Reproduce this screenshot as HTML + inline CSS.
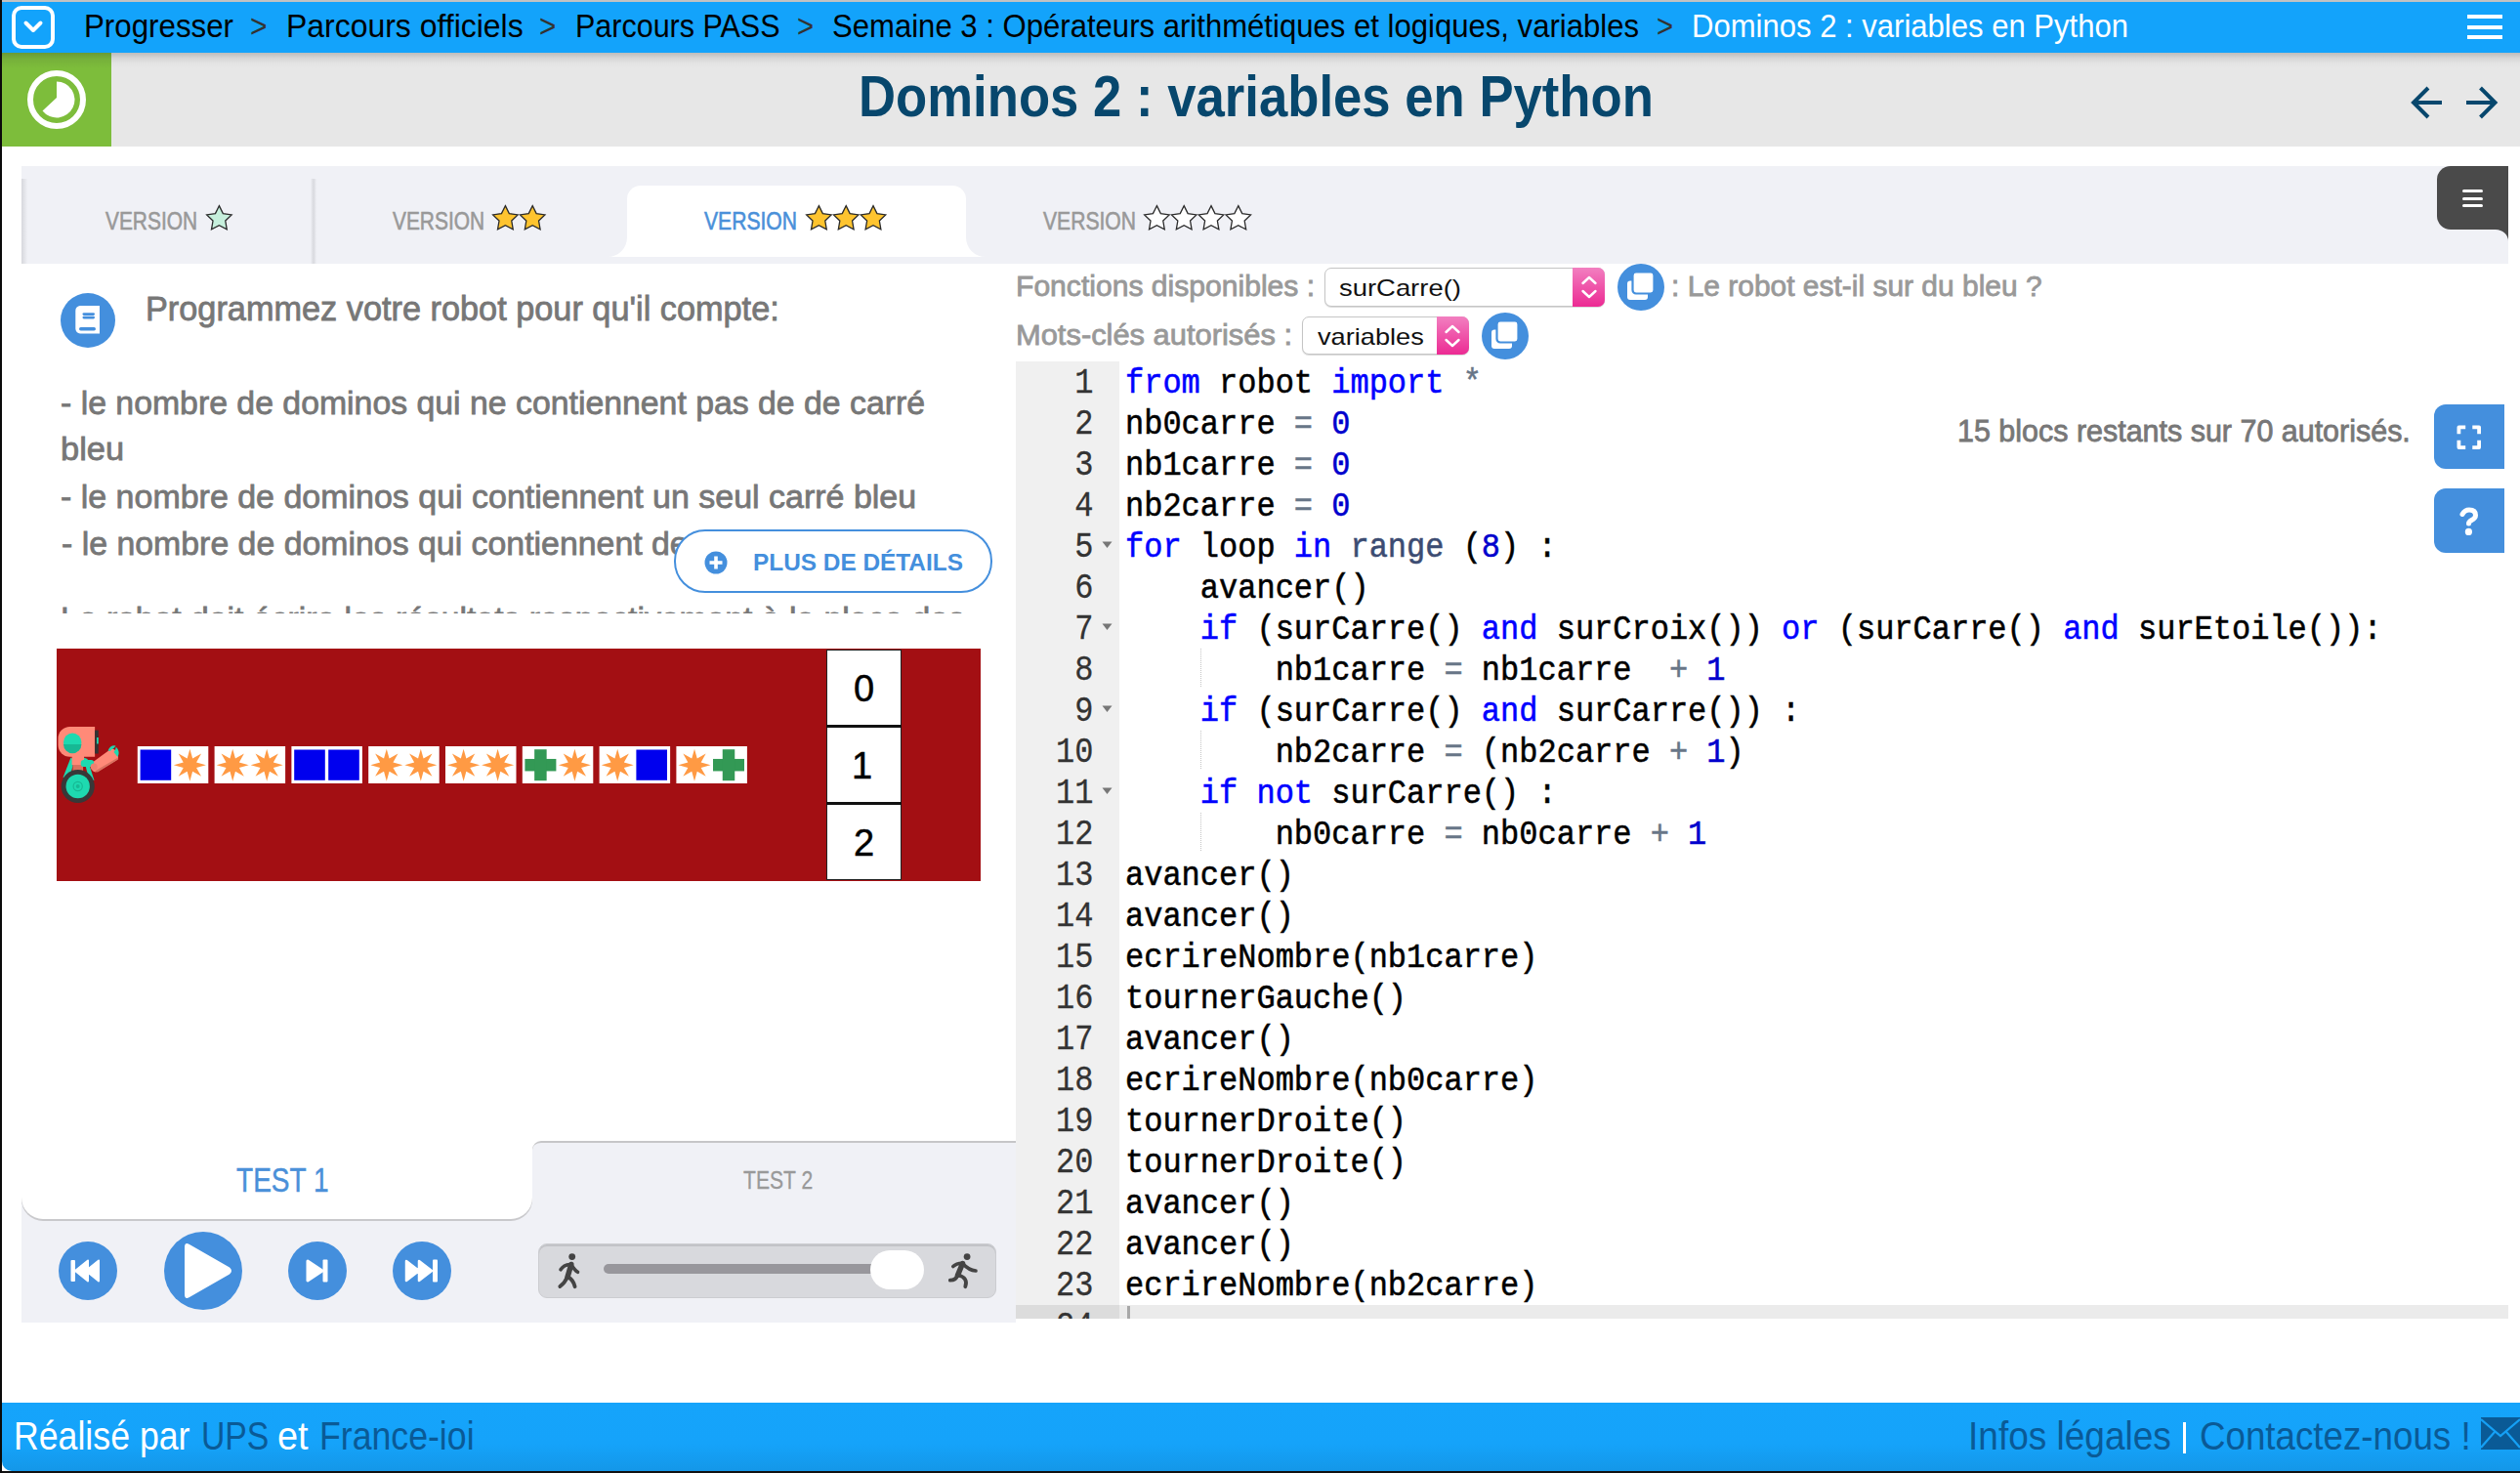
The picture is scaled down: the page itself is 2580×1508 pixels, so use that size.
<!DOCTYPE html><html><head><meta charset="utf-8"><style>
html,body{margin:0;padding:0;width:2580px;height:1508px;overflow:hidden;background:#fff;font-family:"Liberation Sans",sans-serif;}
.a{position:absolute;}
</style></head><body><div class="a" style="left:0;top:0;width:2580px;height:2px;background:#c2c2c2"></div><div class="a" style="left:2px;top:2px;width:2578px;height:52px;background:#13a3fb"></div><div class="a" style="left:12px;top:6px;width:36px;height:36px;border:4px solid #fff;border-radius:10px"></div><svg class="a" style="left:12px;top:6px" width="44" height="44"><polyline points="14.5,17.5 22,25 29.5,17.5" fill="none" stroke="#fff" stroke-width="4" stroke-linecap="round" stroke-linejoin="round"/></svg><div style="position:absolute;left:85.90px;top:9.64px;font-family:'Liberation Sans', sans-serif;font-size:33.5px;line-height:33.5px;color:#000;white-space:pre;transform-origin:0 0;transform:scaleX(0.9340);">Progresser</div><div style="position:absolute;left:255.50px;top:9.64px;font-family:'Liberation Sans', sans-serif;font-size:33.5px;line-height:33.5px;color:#333;white-space:pre;transform-origin:0 0;transform:scaleX(0.8955);">&gt;</div><div style="position:absolute;left:292.50px;top:9.64px;font-family:'Liberation Sans', sans-serif;font-size:33.5px;line-height:33.5px;color:#000;white-space:pre;transform-origin:0 0;transform:scaleX(0.9537);">Parcours officiels</div><div style="position:absolute;left:552.10px;top:9.64px;font-family:'Liberation Sans', sans-serif;font-size:33.5px;line-height:33.5px;color:#333;white-space:pre;transform-origin:0 0;transform:scaleX(0.8852);">&gt;</div><div style="position:absolute;left:589.10px;top:9.64px;font-family:'Liberation Sans', sans-serif;font-size:33.5px;line-height:33.5px;color:#000;white-space:pre;transform-origin:0 0;transform:scaleX(0.9099);">Parcours PASS</div><div style="position:absolute;left:816.00px;top:9.64px;font-family:'Liberation Sans', sans-serif;font-size:33.5px;line-height:33.5px;color:#333;white-space:pre;transform-origin:0 0;transform:scaleX(0.8749);">&gt;</div><div style="position:absolute;left:851.80px;top:9.64px;font-family:'Liberation Sans', sans-serif;font-size:33.5px;line-height:33.5px;color:#000;white-space:pre;transform-origin:0 0;transform:scaleX(0.9280);">Semaine 3 : Opérateurs arithmétiques et logiques, variables</div><div style="position:absolute;left:1695.50px;top:9.64px;font-family:'Liberation Sans', sans-serif;font-size:33.5px;line-height:33.5px;color:#333;white-space:pre;transform-origin:0 0;transform:scaleX(0.8749);">&gt;</div><div style="position:absolute;left:1732.00px;top:9.64px;font-family:'Liberation Sans', sans-serif;font-size:33.5px;line-height:33.5px;color:#fff;white-space:pre;transform-origin:0 0;transform:scaleX(0.9268);">Dominos 2 : variables en Python</div><div class="a" style="left:2526px;top:15px;width:36px;height:4px;background:#fff"></div><div class="a" style="left:2526px;top:26px;width:36px;height:4px;background:#fff"></div><div class="a" style="left:2526px;top:36px;width:36px;height:4px;background:#fff"></div><div class="a" style="left:2px;top:54px;width:2578px;height:96px;background:#e7e7e7"></div><div class="a" style="left:114px;top:54px;width:2466px;height:16px;background:linear-gradient(#bcbcbc,#d6d6d6 35%,#e4e4e4 70%,#e7e7e7)"></div><div class="a" style="left:2px;top:54px;width:112px;height:96px;background:#7dbd3b"></div><div class="a" style="left:2px;top:54px;width:112px;height:16px;background:linear-gradient(#6a9a36,#76b03a 40%,#7dbd3b)"></div><svg class="a" style="left:26px;top:70px" width="64" height="64"><circle cx="32" cy="32" r="27" fill="none" stroke="#fff" stroke-width="6"/><path d="M32,13.5 A18.5,18.5 0 1 1 17.5,43.5 L32,30 Z" fill="#fff"/></svg><div style="position:absolute;left:879.00px;top:70.06px;font-family:'Liberation Sans', sans-serif;font-size:59px;line-height:59px;color:#07476d;white-space:pre;transform-origin:0 0;transform:scaleX(0.8930);font-weight:bold;">Dominos 2 : variables en Python</div><svg class="a" style="left:2460px;top:84px" width="110" height="44"><g fill="none" stroke="#07476d" stroke-width="4"><path d="M11,21 H40 M26,6 L11,21 L26,36"/><path d="M65,21 H94.5 M79.5,6 L94.5,21 L79.5,36"/></g></svg><div class="a" style="left:22px;top:170px;width:2546px;height:100px;background:#f0f1f6"></div><div class="a" style="left:22px;top:183px;width:6px;height:87px;background:linear-gradient(90deg,#d6d7dc,#eff0f5)"></div><div class="a" style="left:318px;top:183px;width:6px;height:87px;background:linear-gradient(90deg,#eff0f5,#d8d9de,#eff0f5)"></div><div class="a" style="left:642px;top:190px;width:347px;height:73px;background:#fff;border-radius:14px 14px 0 0"></div><svg class="a" style="left:622px;top:243px" width="20" height="20"><path d="M0,20 A20,20 0 0 0 20,0 V20 Z" fill="#fff"/></svg><svg class="a" style="left:989px;top:243px" width="20" height="20"><path d="M20,20 A20,20 0 0 1 0,0 V20 Z" fill="#fff"/></svg><div style="position:absolute;left:107.50px;top:213.91px;font-family:'Liberation Sans', sans-serif;font-size:25.5px;line-height:25.5px;color:#999999;white-space:pre;transform-origin:0 0;transform:scaleX(0.8192);-webkit-text-stroke:0.6px #999999;">VERSION</div><div style="position:absolute;left:401.50px;top:213.91px;font-family:'Liberation Sans', sans-serif;font-size:25.5px;line-height:25.5px;color:#999999;white-space:pre;transform-origin:0 0;transform:scaleX(0.8192);-webkit-text-stroke:0.6px #999999;">VERSION</div><div style="position:absolute;left:720.50px;top:213.91px;font-family:'Liberation Sans', sans-serif;font-size:25.5px;line-height:25.5px;color:#4a90d9;white-space:pre;transform-origin:0 0;transform:scaleX(0.8279);-webkit-text-stroke:0.6px #4a90d9;">VERSION</div><div style="position:absolute;left:1067.50px;top:213.91px;font-family:'Liberation Sans', sans-serif;font-size:25.5px;line-height:25.5px;color:#999999;white-space:pre;transform-origin:0 0;transform:scaleX(0.8279);-webkit-text-stroke:0.6px #999999;">VERSION</div><svg class="a" style="left:0;top:0" width="1400" height="270"><path d="M224.39,210.60 L228.33,218.58 L237.14,219.86 L230.77,226.07 L232.27,234.84 L224.39,230.70 L216.52,234.84 L218.02,226.07 L211.65,219.86 L220.46,218.58 Z" fill="#c6efdc" stroke="#2a2a2a" stroke-width="1.3" stroke-linejoin="miter"/><path d="M517.39,210.60 L521.33,218.58 L530.14,219.86 L523.77,226.07 L525.27,234.84 L517.39,230.70 L509.52,234.84 L511.02,226.07 L504.65,219.86 L513.46,218.58 Z" fill="#fec42f" stroke="#2a2a2a" stroke-width="1.3" stroke-linejoin="miter"/><path d="M545.19,210.60 L549.13,218.58 L557.94,219.86 L551.57,226.07 L553.07,234.84 L545.19,230.70 L537.32,234.84 L538.82,226.07 L532.45,219.86 L541.26,218.58 Z" fill="#fec42f" stroke="#2a2a2a" stroke-width="1.3" stroke-linejoin="miter"/><path d="M838.39,210.60 L842.33,218.58 L851.14,219.86 L844.77,226.07 L846.27,234.84 L838.39,230.70 L830.52,234.84 L832.02,226.07 L825.65,219.86 L834.46,218.58 Z" fill="#fec42f" stroke="#2a2a2a" stroke-width="1.3" stroke-linejoin="miter"/><path d="M866.19,210.60 L870.13,218.58 L878.94,219.86 L872.57,226.07 L874.07,234.84 L866.19,230.70 L858.32,234.84 L859.82,226.07 L853.45,219.86 L862.26,218.58 Z" fill="#fec42f" stroke="#2a2a2a" stroke-width="1.3" stroke-linejoin="miter"/><path d="M893.99,210.60 L897.93,218.58 L906.74,219.86 L900.37,226.07 L901.87,234.84 L893.99,230.70 L886.12,234.84 L887.62,226.07 L881.25,219.86 L890.06,218.58 Z" fill="#fec42f" stroke="#2a2a2a" stroke-width="1.3" stroke-linejoin="miter"/><path d="M1184.39,210.60 L1188.33,218.58 L1197.14,219.86 L1190.77,226.07 L1192.27,234.84 L1184.39,230.70 L1176.52,234.84 L1178.02,226.07 L1171.65,219.86 L1180.46,218.58 Z" fill="#ffffff" stroke="#2a2a2a" stroke-width="1.3" stroke-linejoin="miter"/><path d="M1212.19,210.60 L1216.13,218.58 L1224.94,219.86 L1218.57,226.07 L1220.07,234.84 L1212.19,230.70 L1204.32,234.84 L1205.82,226.07 L1199.45,219.86 L1208.26,218.58 Z" fill="#ffffff" stroke="#2a2a2a" stroke-width="1.3" stroke-linejoin="miter"/><path d="M1239.99,210.60 L1243.93,218.58 L1252.74,219.86 L1246.37,226.07 L1247.87,234.84 L1239.99,230.70 L1232.12,234.84 L1233.62,226.07 L1227.25,219.86 L1236.06,218.58 Z" fill="#ffffff" stroke="#2a2a2a" stroke-width="1.3" stroke-linejoin="miter"/><path d="M1267.79,210.60 L1271.73,218.58 L1280.54,219.86 L1274.17,226.07 L1275.67,234.84 L1267.79,230.70 L1259.92,234.84 L1261.42,226.07 L1255.05,219.86 L1263.86,218.58 Z" fill="#ffffff" stroke="#2a2a2a" stroke-width="1.3" stroke-linejoin="miter"/></svg><div class="a" style="left:2495px;top:170px;width:73px;height:65px;background:#4a4a4a;border-radius:14px 0 0 14px"></div><svg class="a" style="left:2555px;top:235px" width="13" height="12"><path d="M0,0 H13 V12 A13,12 0 0 0 0,0 Z" fill="#4a4a4a"/></svg><div class="a" style="left:2521px;top:194px;width:21px;height:3.3px;background:#fff;border-radius:1.5px"></div><div class="a" style="left:2521px;top:201.5px;width:21px;height:3.3px;background:#fff;border-radius:1.5px"></div><div class="a" style="left:2521px;top:209px;width:21px;height:3.3px;background:#fff;border-radius:1.5px"></div><div class="a" style="left:62px;top:300px;width:56px;height:56px;border-radius:50%;background:#448fdd"></div><svg class="a" style="left:62px;top:300px" width="56" height="56"><path d="M20,13 H40 V41.5 H20 A5,5 0 0 1 15.3,36.5 V18 A5,5 0 0 1 20,13 Z" fill="#fff"/><rect x="22.5" y="20.3" width="12.5" height="2.6" rx="1.3" fill="#448fdd"/><rect x="22.5" y="23.8" width="12.5" height="2.6" rx="1.3" fill="#448fdd"/><rect x="19" y="35" width="17" height="3.4" rx="1.7" fill="#448fdd"/></svg><div style="position:absolute;left:148.80px;top:298.37px;font-family:'Liberation Sans', sans-serif;font-size:35px;line-height:35px;color:#777777;white-space:pre;transform-origin:0 0;transform:scaleX(0.9796);-webkit-text-stroke:0.8px #777777;">Programmez votre robot pour qu&#x27;il compte:</div><div style="position:absolute;left:61.50px;top:395.22px;font-family:'Liberation Sans', sans-serif;font-size:34px;line-height:34px;color:#777777;white-space:pre;transform-origin:0 0;transform:scaleX(0.9942);-webkit-text-stroke:0.8px #777777;">- le nombre de dominos qui ne contiennent pas de de carré</div><div style="position:absolute;left:61.50px;top:442.22px;font-family:'Liberation Sans', sans-serif;font-size:34px;line-height:34px;color:#777777;white-space:pre;transform-origin:0 0;transform:scaleX(1.0115);-webkit-text-stroke:0.8px #777777;">bleu</div><div style="position:absolute;left:61.50px;top:491.22px;font-family:'Liberation Sans', sans-serif;font-size:34px;line-height:34px;color:#777777;white-space:pre;transform-origin:0 0;transform:scaleX(0.9990);-webkit-text-stroke:0.8px #777777;">- le nombre de dominos qui contiennent un seul carré bleu</div><div style="position:absolute;left:63.00px;top:539.22px;font-family:'Liberation Sans', sans-serif;font-size:34px;line-height:34px;color:#777777;white-space:pre;transform-origin:0 0;transform:scaleX(0.9956);-webkit-text-stroke:0.8px #777777;">- le nombre de dominos qui contiennent deux carrés bleus</div><div class="a" style="left:40px;top:600px;width:960px;height:28px;overflow:hidden"><div style="position:absolute;left:21.50px;top:16.22px;font-family:'Liberation Sans', sans-serif;font-size:34px;line-height:34px;color:#777777;white-space:pre;transform-origin:0 0;transform:scaleX(0.9918);-webkit-text-stroke:0.8px #777777;">Le robot doit écrire les résultats respectivement à la place des</div></div><div class="a" style="left:690px;top:542px;width:322px;height:61px;border:2px solid #448fdd;border-radius:32px;background:#fff"></div><svg class="a" style="left:721px;top:564px" width="24" height="24"><circle cx="12" cy="12" r="11.5" fill="#448fdd"/><path d="M12,5.5 V18.5 M5.5,12 H18.5" stroke="#fff" stroke-width="3.6"/></svg><div style="position:absolute;left:770.50px;top:564.28px;font-family:'Liberation Sans', sans-serif;font-size:24px;line-height:24px;color:#448fdd;white-space:pre;transform-origin:0 0;transform:scaleX(1.0157);font-weight:bold;">PLUS DE DÉTAILS</div><div class="a" style="left:58.3px;top:664.3px;width:945.6px;height:237.4px;background:#a30f13"></div><svg class="a" style="left:0;top:0" width="1010" height="910"><rect x="140.80" y="764" width="72.5" height="38" fill="#fff"/><rect x="143.60" y="767.5" width="31.6" height="31.3" fill="#0000ee"/><polygon points="194.40,766.70 197.16,776.55 206.07,771.53 201.05,780.44 210.90,783.20 201.05,785.96 206.07,794.87 197.16,789.85 194.40,799.70 191.64,789.85 182.73,794.87 187.75,785.96 177.90,783.20 187.75,780.44 182.73,771.53 191.64,776.55" fill="#ff9a44"/><rect x="219.60" y="764" width="72.5" height="38" fill="#fff"/><polygon points="238.20,766.70 240.96,776.55 249.87,771.53 244.85,780.44 254.70,783.20 244.85,785.96 249.87,794.87 240.96,789.85 238.20,799.70 235.44,789.85 226.53,794.87 231.55,785.96 221.70,783.20 231.55,780.44 226.53,771.53 235.44,776.55" fill="#ff9a44"/><polygon points="273.20,766.70 275.96,776.55 284.87,771.53 279.85,780.44 289.70,783.20 279.85,785.96 284.87,794.87 275.96,789.85 273.20,799.70 270.44,789.85 261.53,794.87 266.55,785.96 256.70,783.20 266.55,780.44 261.53,771.53 270.44,776.55" fill="#ff9a44"/><rect x="298.40" y="764" width="72.5" height="38" fill="#fff"/><rect x="301.20" y="767.5" width="31.6" height="31.3" fill="#0000ee"/><rect x="336.20" y="767.5" width="31.6" height="31.3" fill="#0000ee"/><rect x="377.20" y="764" width="72.5" height="38" fill="#fff"/><polygon points="395.80,766.70 398.56,776.55 407.47,771.53 402.45,780.44 412.30,783.20 402.45,785.96 407.47,794.87 398.56,789.85 395.80,799.70 393.04,789.85 384.13,794.87 389.15,785.96 379.30,783.20 389.15,780.44 384.13,771.53 393.04,776.55" fill="#ff9a44"/><polygon points="430.80,766.70 433.56,776.55 442.47,771.53 437.45,780.44 447.30,783.20 437.45,785.96 442.47,794.87 433.56,789.85 430.80,799.70 428.04,789.85 419.13,794.87 424.15,785.96 414.30,783.20 424.15,780.44 419.13,771.53 428.04,776.55" fill="#ff9a44"/><rect x="456.00" y="764" width="72.5" height="38" fill="#fff"/><polygon points="474.60,766.70 477.36,776.55 486.27,771.53 481.25,780.44 491.10,783.20 481.25,785.96 486.27,794.87 477.36,789.85 474.60,799.70 471.84,789.85 462.93,794.87 467.95,785.96 458.10,783.20 467.95,780.44 462.93,771.53 471.84,776.55" fill="#ff9a44"/><polygon points="509.60,766.70 512.36,776.55 521.27,771.53 516.25,780.44 526.10,783.20 516.25,785.96 521.27,794.87 512.36,789.85 509.60,799.70 506.84,789.85 497.93,794.87 502.95,785.96 493.10,783.20 502.95,780.44 497.93,771.53 506.84,776.55" fill="#ff9a44"/><rect x="534.80" y="764" width="72.5" height="38" fill="#fff"/><rect x="537.40" y="776.95" width="32" height="12.5" fill="#339955"/><rect x="547.15" y="767.20" width="12.5" height="32" fill="#339955"/><polygon points="588.40,766.70 591.16,776.55 600.07,771.53 595.05,780.44 604.90,783.20 595.05,785.96 600.07,794.87 591.16,789.85 588.40,799.70 585.64,789.85 576.73,794.87 581.75,785.96 571.90,783.20 581.75,780.44 576.73,771.53 585.64,776.55" fill="#ff9a44"/><rect x="613.60" y="764" width="72.5" height="38" fill="#fff"/><polygon points="632.20,766.70 634.96,776.55 643.87,771.53 638.85,780.44 648.70,783.20 638.85,785.96 643.87,794.87 634.96,789.85 632.20,799.70 629.44,789.85 620.53,794.87 625.55,785.96 615.70,783.20 625.55,780.44 620.53,771.53 629.44,776.55" fill="#ff9a44"/><rect x="651.40" y="767.5" width="31.6" height="31.3" fill="#0000ee"/><rect x="692.40" y="764" width="72.5" height="38" fill="#fff"/><polygon points="711.00,766.70 713.76,776.55 722.67,771.53 717.65,780.44 727.50,783.20 717.65,785.96 722.67,794.87 713.76,789.85 711.00,799.70 708.24,789.85 699.33,794.87 704.35,785.96 694.50,783.20 704.35,780.44 699.33,771.53 708.24,776.55" fill="#ff9a44"/><rect x="730.00" y="776.95" width="32" height="12.5" fill="#339955"/><rect x="739.75" y="767.20" width="12.5" height="32" fill="#339955"/><g><path d="M72.5,775.5 L76,778 L71,798 L64.5,796 Z" fill="#1ed9b0"/><path d="M85.5,775.5 L89.5,777 L96.5,799 L91,798 Z" fill="#1ed9b0"/><rect x="73.6" y="774" width="12.4" height="9" fill="#ff8a78"/><rect x="74.5" y="783" width="10.6" height="8" fill="#d9705f"/><path d="M59.5,756 A12,12 0 0 1 71.5,744 H97.1 V774.8 H71.5 A12,12 0 0 1 59.5,762.8 Z" fill="#ff8a78"/><rect x="97.1" y="747.6" width="3.7" height="23.9" fill="#333"/><rect x="99" y="755" width="1.8" height="6.5" fill="#1ed9b0"/><circle cx="74.2" cy="759.8" r="9.2" fill="#1ed9b0"/><path d="M65,762 A9.2,9.2 0 0 0 83.4,762 Z" fill="#17b894"/><path d="M94,781 L112.5,767.5 Q116,765.5 118.5,768.5 L121,774.5 Q121.5,777 119,778.5 L100,790 Q96,791.5 94,788 Z" fill="#ff8a78"/><path d="M97,789.5 L120,776 L121,777.5 L100,790.5 Z" fill="#d9705f"/><path d="M110.5,768.5 Q113,762.5 118.5,763.5 L116,766.5 Q113.5,766.5 113,769 Z" fill="#1ed9b0"/><path d="M116.5,770 Q119,766.5 118.5,764.5 Q122,767 121.5,772 L120.5,775 Z" fill="#1ed9b0"/><rect x="82.7" y="778" width="13.5" height="7" rx="3" fill="#1ed9b0"/><circle cx="96.2" cy="785" r="3.5" fill="#f08070"/><circle cx="79.7" cy="805" r="17.1" fill="#383838"/><circle cx="79.7" cy="805" r="12.2" fill="#1ed9b0"/><circle cx="79.7" cy="805" r="4.6" fill="none" stroke="#17b894" stroke-width="1.2"/><circle cx="79.7" cy="805" r="2" fill="#17b894"/></g></svg><div class="a" style="left:846.4px;top:664.5px;width:75px;height:234px;background:#fff;border:1px solid #222"></div><div class="a" style="left:846.4px;top:742px;width:77px;height:3px;background:#111"></div><div class="a" style="left:846.4px;top:821px;width:77px;height:3px;background:#111"></div><div style="position:absolute;left:874.00px;top:685.73px;font-family:'Liberation Sans', sans-serif;font-size:38px;line-height:38px;color:#000;white-space:pre;transform-origin:0 0;-webkit-text-stroke:0.5px #000;">0</div><div style="position:absolute;left:872.00px;top:764.83px;font-family:'Liberation Sans', sans-serif;font-size:38px;line-height:38px;color:#000;white-space:pre;transform-origin:0 0;-webkit-text-stroke:0.5px #000;">1</div><div style="position:absolute;left:874.00px;top:843.63px;font-family:'Liberation Sans', sans-serif;font-size:38px;line-height:38px;color:#000;white-space:pre;transform-origin:0 0;-webkit-text-stroke:0.5px #000;">2</div><div class="a" style="left:22px;top:1200px;width:1018px;height:154px;background:#f0f1f6"></div><div class="a" style="left:545px;top:1168px;width:495px;height:40px;background:#f0f1f6;border-top:2px solid #c6c6c8;border-radius:9px 0 0 0;box-sizing:border-box"></div><div class="a" style="left:22px;top:1140px;width:523px;height:108px;background:#fff;border-radius:0 0 22px 22px;box-shadow:0 2px 0 #c9c9cc"></div><div style="position:absolute;left:242.00px;top:1191.30px;font-family:'Liberation Sans', sans-serif;font-size:34.5px;line-height:34.5px;color:#4a90d9;white-space:pre;transform-origin:0 0;transform:scaleX(0.8128);-webkit-text-stroke:0.45px #4a90d9;">TEST 1</div><div style="position:absolute;left:761.20px;top:1194.79px;font-family:'Liberation Sans', sans-serif;font-size:26px;line-height:26px;color:#999999;white-space:pre;transform-origin:0 0;transform:scaleX(0.8115);-webkit-text-stroke:0.3px #999999;">TEST 2</div><svg class="a" style="left:60px;top:1271px" width="60" height="60"><circle cx="30" cy="30" r="30" fill="#448fdd"/><rect x="12.5" y="19" width="4.5" height="22" rx="1" fill="#fff"/><path d="M17,30 L30,19.5 V40.5 Z M28,30 L41,19.5 V40.5 Z" fill="#fff" stroke="#fff" stroke-width="2" stroke-linejoin="round"/></svg><svg class="a" style="left:168px;top:1261px" width="80" height="80"><circle cx="40" cy="40" r="40" fill="#448fdd"/><path d="M21,16 Q21,10 26,13 L67,36.5 Q71,40 67,43.5 L26,67 Q21,70 21,64 Z" fill="#fff"/></svg><svg class="a" style="left:295px;top:1271px" width="60" height="60"><circle cx="30" cy="30" r="30" fill="#448fdd"/><path d="M20,20 L35,30 L20,40 Z" fill="#fff" stroke="#fff" stroke-width="3" stroke-linejoin="round"/><rect x="35.5" y="18.5" width="5" height="23" rx="1" fill="#fff"/></svg><svg class="a" style="left:402px;top:1271px" width="60" height="60"><circle cx="30" cy="30" r="30" fill="#448fdd"/><path d="M14,20 L27,30 L14,40 Z M27,20 L40,30 L27,40 Z" fill="#fff" stroke="#fff" stroke-width="2.5" stroke-linejoin="round"/><rect x="41" y="18.5" width="5" height="23" rx="1" fill="#fff"/></svg><div class="a" style="left:551px;top:1273px;width:469px;height:56px;background:#d8d9dd;border:1.5px solid #cbccd0;box-shadow:inset 0 2px 0 #c2c3c7;border-radius:9px;box-sizing:border-box"></div><div class="a" style="left:618px;top:1294px;width:290px;height:10px;background:#98979c;border-radius:5px"></div><div class="a" style="left:891px;top:1280px;width:55px;height:40px;background:#fff;border-radius:20px"></div><svg class="a" style="left:0;top:0;overflow:visible" width="1" height="1"><g fill="none" stroke="#444" stroke-linecap="round" stroke-linejoin="round"><circle cx="585.7" cy="1286.6" r="3.4" fill="#444" stroke="none"/><path d="M584.8,1294.5 L581,1307.5" stroke-width="5.5"/><path d="M583.5,1294.5 Q577,1295 574,1299.8" stroke-width="3.6"/><path d="M585,1295 Q588.5,1300.5 591.5,1302.3" stroke-width="3.6"/><path d="M580.5,1308 Q578.5,1313 573.3,1317" stroke-width="3.8"/><path d="M582,1307.5 Q587,1310.5 588.6,1317.2" stroke-width="3.8"/></g></svg><svg class="a" style="left:0;top:0;overflow:visible" width="1" height="1"><g fill="none" stroke="#444" stroke-linecap="round" stroke-linejoin="round"><circle cx="990.1" cy="1286.6" r="3.4" fill="#444" stroke="none"/><path d="M985.5,1293.5 L980.5,1305.5" stroke-width="5.5"/><path d="M985,1293.2 Q979,1293.5 975.8,1296.5" stroke-width="3.6"/><path d="M986,1294 Q992,1300.5 999,1301" stroke-width="3.6"/><path d="M980,1306 Q979,1310.5 972.8,1310.6" stroke-width="3.8"/><path d="M981,1305.5 Q991.5,1308 988.3,1317.2" stroke-width="3.8"/></g></svg><div style="position:absolute;left:1039.50px;top:277.61px;font-family:'Liberation Sans', sans-serif;font-size:30px;line-height:30px;color:#999999;white-space:pre;transform-origin:0 0;transform:scaleX(1.0029);-webkit-text-stroke:0.8px #999999;">Fonctions disponibles :</div><div style="position:absolute;left:1039.50px;top:328.21px;font-family:'Liberation Sans', sans-serif;font-size:30px;line-height:30px;color:#999999;white-space:pre;transform-origin:0 0;transform:scaleX(1.0287);-webkit-text-stroke:0.8px #999999;">Mots-clés autorisés :</div><div style="position:absolute;left:1711.00px;top:277.61px;font-family:'Liberation Sans', sans-serif;font-size:30px;line-height:30px;color:#999999;white-space:pre;transform-origin:0 0;transform:scaleX(0.9984);-webkit-text-stroke:0.8px #999999;">: Le robot est-il sur du bleu ?</div><div class="a" style="left:1355.5px;top:274.3px;width:287.5px;height:39.39999999999998px;background:#fff;border:1px solid #c5c5c5;border-radius:7px;box-sizing:border-box;box-shadow:0 1px 1px rgba(0,0,0,0.15)"></div><div class="a" style="left:1610px;top:274.3px;width:33px;height:39.39999999999998px;background:linear-gradient(#f27fc0,#ec2a93);border-radius:0 7px 7px 0"></div><svg class="a" style="left:1616.5px;top:280.0px" width="20" height="28"><path d="M3.5,10 L10,4 L16.5,10 M3.5,18 L10,24 L16.5,18" fill="none" stroke="#fff" stroke-width="2.4" stroke-linecap="round" stroke-linejoin="round"/></svg><div style="position:absolute;left:1370.50px;top:282.88px;font-family:'Liberation Sans', sans-serif;font-size:24px;line-height:24px;color:#111;white-space:pre;transform-origin:0 0;transform:scaleX(1.1422);">surCarre()</div><div class="a" style="left:1332.5px;top:324.3px;width:171.0999999999999px;height:39.19999999999999px;background:#fff;border:1px solid #c5c5c5;border-radius:7px;box-sizing:border-box;box-shadow:0 1px 1px rgba(0,0,0,0.15)"></div><div class="a" style="left:1471px;top:324.3px;width:32.59999999999991px;height:39.19999999999999px;background:linear-gradient(#f27fc0,#ec2a93);border-radius:0 7px 7px 0"></div><svg class="a" style="left:1477.3px;top:329.9px" width="20" height="28"><path d="M3.5,10 L10,4 L16.5,10 M3.5,18 L10,24 L16.5,18" fill="none" stroke="#fff" stroke-width="2.4" stroke-linecap="round" stroke-linejoin="round"/></svg><div style="position:absolute;left:1349.00px;top:333.38px;font-family:'Liberation Sans', sans-serif;font-size:24px;line-height:24px;color:#111;white-space:pre;transform-origin:0 0;transform:scaleX(1.1333);">variables</div><svg class="a" style="left:1656px;top:270px" width="48" height="48"><circle cx="24" cy="24" r="24" fill="#448fdd"/><rect x="10" y="17.5" width="21" height="19.5" rx="3" fill="#fff"/><rect x="15.5" y="8.5" width="22" height="22" rx="3.5" fill="#fff" stroke="#448fdd" stroke-width="2.2"/></svg><svg class="a" style="left:1517px;top:320px" width="48" height="48"><circle cx="24" cy="24" r="24" fill="#448fdd"/><rect x="10" y="17.5" width="21" height="19.5" rx="3" fill="#fff"/><rect x="15.5" y="8.5" width="22" height="22" rx="3.5" fill="#fff" stroke="#448fdd" stroke-width="2.2"/></svg><div class="a" style="left:1040px;top:370px;width:1528px;height:980px;background:#fff;overflow:hidden"><div class="a" style="left:0;top:0;width:106px;height:980px;background:#f0f0f0"></div><div class="a" style="left:106px;top:966.0px;width:1422px;height:42px;background:#ebebeb"></div><div class="a" style="left:0;top:966.0px;width:106px;height:42px;background:#dcdcdc"></div><div class="a" style="left:113.5px;top:966.5px;width:3.5px;height:40px;background:#a8a8a8"></div><div class="a" style="left:112px;top:2.5px;height:42px;font-family:'Liberation Mono',monospace;font-size:32px;line-height:42px;white-space:pre;-webkit-text-stroke:0.5px currentColor;transform:scaleY(1.08);transform-origin:0 29.5px"><span style="color:#0000ff">from</span><span style="color:#000"> robot </span><span style="color:#0000ff">import</span><span style="color:#000"> </span><span style="color:#687687">*</span></div><div class="a" style="left:0;width:79.5px;text-align:right;top:2.5px;height:42px;font-family:'Liberation Mono',monospace;font-size:32px;line-height:42px;color:#333;-webkit-text-stroke:0.25px #333;transform:scaleY(1.15);transform-origin:0 29.5px">1</div><div class="a" style="left:112px;top:44.5px;height:42px;font-family:'Liberation Mono',monospace;font-size:32px;line-height:42px;white-space:pre;-webkit-text-stroke:0.5px currentColor;transform:scaleY(1.08);transform-origin:0 29.5px"><span style="color:#000">nb0carre </span><span style="color:#687687">=</span><span style="color:#000"> </span><span style="color:#0000cd">0</span></div><div class="a" style="left:0;width:79.5px;text-align:right;top:44.5px;height:42px;font-family:'Liberation Mono',monospace;font-size:32px;line-height:42px;color:#333;-webkit-text-stroke:0.25px #333;transform:scaleY(1.15);transform-origin:0 29.5px">2</div><div class="a" style="left:112px;top:86.5px;height:42px;font-family:'Liberation Mono',monospace;font-size:32px;line-height:42px;white-space:pre;-webkit-text-stroke:0.5px currentColor;transform:scaleY(1.08);transform-origin:0 29.5px"><span style="color:#000">nb1carre </span><span style="color:#687687">=</span><span style="color:#000"> </span><span style="color:#0000cd">0</span></div><div class="a" style="left:0;width:79.5px;text-align:right;top:86.5px;height:42px;font-family:'Liberation Mono',monospace;font-size:32px;line-height:42px;color:#333;-webkit-text-stroke:0.25px #333;transform:scaleY(1.15);transform-origin:0 29.5px">3</div><div class="a" style="left:112px;top:128.5px;height:42px;font-family:'Liberation Mono',monospace;font-size:32px;line-height:42px;white-space:pre;-webkit-text-stroke:0.5px currentColor;transform:scaleY(1.08);transform-origin:0 29.5px"><span style="color:#000">nb2carre </span><span style="color:#687687">=</span><span style="color:#000"> </span><span style="color:#0000cd">0</span></div><div class="a" style="left:0;width:79.5px;text-align:right;top:128.5px;height:42px;font-family:'Liberation Mono',monospace;font-size:32px;line-height:42px;color:#333;-webkit-text-stroke:0.25px #333;transform:scaleY(1.15);transform-origin:0 29.5px">4</div><div class="a" style="left:112px;top:170.5px;height:42px;font-family:'Liberation Mono',monospace;font-size:32px;line-height:42px;white-space:pre;-webkit-text-stroke:0.5px currentColor;transform:scaleY(1.08);transform-origin:0 29.5px"><span style="color:#0000ff">for</span><span style="color:#000"> loop </span><span style="color:#0000ff">in</span><span style="color:#000"> </span><span style="color:#3c4c72">range</span><span style="color:#000"> (</span><span style="color:#0000cd">8</span><span style="color:#000">) :</span></div><div class="a" style="left:0;width:79.5px;text-align:right;top:170.5px;height:42px;font-family:'Liberation Mono',monospace;font-size:32px;line-height:42px;color:#333;-webkit-text-stroke:0.25px #333;transform:scaleY(1.15);transform-origin:0 29.5px">5</div><div class="a" style="left:112px;top:212.5px;height:42px;font-family:'Liberation Mono',monospace;font-size:32px;line-height:42px;white-space:pre;-webkit-text-stroke:0.5px currentColor;transform:scaleY(1.08);transform-origin:0 29.5px"><span style="color:#000">    avancer()</span></div><div class="a" style="left:0;width:79.5px;text-align:right;top:212.5px;height:42px;font-family:'Liberation Mono',monospace;font-size:32px;line-height:42px;color:#333;-webkit-text-stroke:0.25px #333;transform:scaleY(1.15);transform-origin:0 29.5px">6</div><div class="a" style="left:112px;top:254.5px;height:42px;font-family:'Liberation Mono',monospace;font-size:32px;line-height:42px;white-space:pre;-webkit-text-stroke:0.5px currentColor;transform:scaleY(1.08);transform-origin:0 29.5px"><span style="color:#000">    </span><span style="color:#0000ff">if</span><span style="color:#000"> (surCarre() </span><span style="color:#0000ff">and</span><span style="color:#000"> surCroix()) </span><span style="color:#0000ff">or</span><span style="color:#000"> (surCarre() </span><span style="color:#0000ff">and</span><span style="color:#000"> surEtoile()):</span></div><div class="a" style="left:0;width:79.5px;text-align:right;top:254.5px;height:42px;font-family:'Liberation Mono',monospace;font-size:32px;line-height:42px;color:#333;-webkit-text-stroke:0.25px #333;transform:scaleY(1.15);transform-origin:0 29.5px">7</div><div class="a" style="left:112px;top:296.5px;height:42px;font-family:'Liberation Mono',monospace;font-size:32px;line-height:42px;white-space:pre;-webkit-text-stroke:0.5px currentColor;transform:scaleY(1.08);transform-origin:0 29.5px"><span style="color:#000">        nb1carre </span><span style="color:#687687">=</span><span style="color:#000"> nb1carre  </span><span style="color:#687687">+</span><span style="color:#000"> </span><span style="color:#0000cd">1</span></div><div class="a" style="left:0;width:79.5px;text-align:right;top:296.5px;height:42px;font-family:'Liberation Mono',monospace;font-size:32px;line-height:42px;color:#333;-webkit-text-stroke:0.25px #333;transform:scaleY(1.15);transform-origin:0 29.5px">8</div><div class="a" style="left:112px;top:338.5px;height:42px;font-family:'Liberation Mono',monospace;font-size:32px;line-height:42px;white-space:pre;-webkit-text-stroke:0.5px currentColor;transform:scaleY(1.08);transform-origin:0 29.5px"><span style="color:#000">    </span><span style="color:#0000ff">if</span><span style="color:#000"> (surCarre() </span><span style="color:#0000ff">and</span><span style="color:#000"> surCarre()) :</span></div><div class="a" style="left:0;width:79.5px;text-align:right;top:338.5px;height:42px;font-family:'Liberation Mono',monospace;font-size:32px;line-height:42px;color:#333;-webkit-text-stroke:0.25px #333;transform:scaleY(1.15);transform-origin:0 29.5px">9</div><div class="a" style="left:112px;top:380.5px;height:42px;font-family:'Liberation Mono',monospace;font-size:32px;line-height:42px;white-space:pre;-webkit-text-stroke:0.5px currentColor;transform:scaleY(1.08);transform-origin:0 29.5px"><span style="color:#000">        nb2carre </span><span style="color:#687687">=</span><span style="color:#000"> (nb2carre </span><span style="color:#687687">+</span><span style="color:#000"> </span><span style="color:#0000cd">1</span><span style="color:#000">)</span></div><div class="a" style="left:0;width:79.5px;text-align:right;top:380.5px;height:42px;font-family:'Liberation Mono',monospace;font-size:32px;line-height:42px;color:#333;-webkit-text-stroke:0.25px #333;transform:scaleY(1.15);transform-origin:0 29.5px">10</div><div class="a" style="left:112px;top:422.5px;height:42px;font-family:'Liberation Mono',monospace;font-size:32px;line-height:42px;white-space:pre;-webkit-text-stroke:0.5px currentColor;transform:scaleY(1.08);transform-origin:0 29.5px"><span style="color:#000">    </span><span style="color:#0000ff">if</span><span style="color:#000"> </span><span style="color:#0000ff">not</span><span style="color:#000"> surCarre() :</span></div><div class="a" style="left:0;width:79.5px;text-align:right;top:422.5px;height:42px;font-family:'Liberation Mono',monospace;font-size:32px;line-height:42px;color:#333;-webkit-text-stroke:0.25px #333;transform:scaleY(1.15);transform-origin:0 29.5px">11</div><div class="a" style="left:112px;top:464.5px;height:42px;font-family:'Liberation Mono',monospace;font-size:32px;line-height:42px;white-space:pre;-webkit-text-stroke:0.5px currentColor;transform:scaleY(1.08);transform-origin:0 29.5px"><span style="color:#000">        nb0carre </span><span style="color:#687687">=</span><span style="color:#000"> nb0carre </span><span style="color:#687687">+</span><span style="color:#000"> </span><span style="color:#0000cd">1</span></div><div class="a" style="left:0;width:79.5px;text-align:right;top:464.5px;height:42px;font-family:'Liberation Mono',monospace;font-size:32px;line-height:42px;color:#333;-webkit-text-stroke:0.25px #333;transform:scaleY(1.15);transform-origin:0 29.5px">12</div><div class="a" style="left:112px;top:506.5px;height:42px;font-family:'Liberation Mono',monospace;font-size:32px;line-height:42px;white-space:pre;-webkit-text-stroke:0.5px currentColor;transform:scaleY(1.08);transform-origin:0 29.5px"><span style="color:#000">avancer()</span></div><div class="a" style="left:0;width:79.5px;text-align:right;top:506.5px;height:42px;font-family:'Liberation Mono',monospace;font-size:32px;line-height:42px;color:#333;-webkit-text-stroke:0.25px #333;transform:scaleY(1.15);transform-origin:0 29.5px">13</div><div class="a" style="left:112px;top:548.5px;height:42px;font-family:'Liberation Mono',monospace;font-size:32px;line-height:42px;white-space:pre;-webkit-text-stroke:0.5px currentColor;transform:scaleY(1.08);transform-origin:0 29.5px"><span style="color:#000">avancer()</span></div><div class="a" style="left:0;width:79.5px;text-align:right;top:548.5px;height:42px;font-family:'Liberation Mono',monospace;font-size:32px;line-height:42px;color:#333;-webkit-text-stroke:0.25px #333;transform:scaleY(1.15);transform-origin:0 29.5px">14</div><div class="a" style="left:112px;top:590.5px;height:42px;font-family:'Liberation Mono',monospace;font-size:32px;line-height:42px;white-space:pre;-webkit-text-stroke:0.5px currentColor;transform:scaleY(1.08);transform-origin:0 29.5px"><span style="color:#000">ecrireNombre(nb1carre)</span></div><div class="a" style="left:0;width:79.5px;text-align:right;top:590.5px;height:42px;font-family:'Liberation Mono',monospace;font-size:32px;line-height:42px;color:#333;-webkit-text-stroke:0.25px #333;transform:scaleY(1.15);transform-origin:0 29.5px">15</div><div class="a" style="left:112px;top:632.5px;height:42px;font-family:'Liberation Mono',monospace;font-size:32px;line-height:42px;white-space:pre;-webkit-text-stroke:0.5px currentColor;transform:scaleY(1.08);transform-origin:0 29.5px"><span style="color:#000">tournerGauche()</span></div><div class="a" style="left:0;width:79.5px;text-align:right;top:632.5px;height:42px;font-family:'Liberation Mono',monospace;font-size:32px;line-height:42px;color:#333;-webkit-text-stroke:0.25px #333;transform:scaleY(1.15);transform-origin:0 29.5px">16</div><div class="a" style="left:112px;top:674.5px;height:42px;font-family:'Liberation Mono',monospace;font-size:32px;line-height:42px;white-space:pre;-webkit-text-stroke:0.5px currentColor;transform:scaleY(1.08);transform-origin:0 29.5px"><span style="color:#000">avancer()</span></div><div class="a" style="left:0;width:79.5px;text-align:right;top:674.5px;height:42px;font-family:'Liberation Mono',monospace;font-size:32px;line-height:42px;color:#333;-webkit-text-stroke:0.25px #333;transform:scaleY(1.15);transform-origin:0 29.5px">17</div><div class="a" style="left:112px;top:716.5px;height:42px;font-family:'Liberation Mono',monospace;font-size:32px;line-height:42px;white-space:pre;-webkit-text-stroke:0.5px currentColor;transform:scaleY(1.08);transform-origin:0 29.5px"><span style="color:#000">ecrireNombre(nb0carre)</span></div><div class="a" style="left:0;width:79.5px;text-align:right;top:716.5px;height:42px;font-family:'Liberation Mono',monospace;font-size:32px;line-height:42px;color:#333;-webkit-text-stroke:0.25px #333;transform:scaleY(1.15);transform-origin:0 29.5px">18</div><div class="a" style="left:112px;top:758.5px;height:42px;font-family:'Liberation Mono',monospace;font-size:32px;line-height:42px;white-space:pre;-webkit-text-stroke:0.5px currentColor;transform:scaleY(1.08);transform-origin:0 29.5px"><span style="color:#000">tournerDroite()</span></div><div class="a" style="left:0;width:79.5px;text-align:right;top:758.5px;height:42px;font-family:'Liberation Mono',monospace;font-size:32px;line-height:42px;color:#333;-webkit-text-stroke:0.25px #333;transform:scaleY(1.15);transform-origin:0 29.5px">19</div><div class="a" style="left:112px;top:800.5px;height:42px;font-family:'Liberation Mono',monospace;font-size:32px;line-height:42px;white-space:pre;-webkit-text-stroke:0.5px currentColor;transform:scaleY(1.08);transform-origin:0 29.5px"><span style="color:#000">tournerDroite()</span></div><div class="a" style="left:0;width:79.5px;text-align:right;top:800.5px;height:42px;font-family:'Liberation Mono',monospace;font-size:32px;line-height:42px;color:#333;-webkit-text-stroke:0.25px #333;transform:scaleY(1.15);transform-origin:0 29.5px">20</div><div class="a" style="left:112px;top:842.5px;height:42px;font-family:'Liberation Mono',monospace;font-size:32px;line-height:42px;white-space:pre;-webkit-text-stroke:0.5px currentColor;transform:scaleY(1.08);transform-origin:0 29.5px"><span style="color:#000">avancer()</span></div><div class="a" style="left:0;width:79.5px;text-align:right;top:842.5px;height:42px;font-family:'Liberation Mono',monospace;font-size:32px;line-height:42px;color:#333;-webkit-text-stroke:0.25px #333;transform:scaleY(1.15);transform-origin:0 29.5px">21</div><div class="a" style="left:112px;top:884.5px;height:42px;font-family:'Liberation Mono',monospace;font-size:32px;line-height:42px;white-space:pre;-webkit-text-stroke:0.5px currentColor;transform:scaleY(1.08);transform-origin:0 29.5px"><span style="color:#000">avancer()</span></div><div class="a" style="left:0;width:79.5px;text-align:right;top:884.5px;height:42px;font-family:'Liberation Mono',monospace;font-size:32px;line-height:42px;color:#333;-webkit-text-stroke:0.25px #333;transform:scaleY(1.15);transform-origin:0 29.5px">22</div><div class="a" style="left:112px;top:926.5px;height:42px;font-family:'Liberation Mono',monospace;font-size:32px;line-height:42px;white-space:pre;-webkit-text-stroke:0.5px currentColor;transform:scaleY(1.08);transform-origin:0 29.5px"><span style="color:#000">ecrireNombre(nb2carre)</span></div><div class="a" style="left:0;width:79.5px;text-align:right;top:926.5px;height:42px;font-family:'Liberation Mono',monospace;font-size:32px;line-height:42px;color:#333;-webkit-text-stroke:0.25px #333;transform:scaleY(1.15);transform-origin:0 29.5px">23</div><div class="a" style="left:112px;top:968.5px;height:42px;font-family:'Liberation Mono',monospace;font-size:32px;line-height:42px;white-space:pre;-webkit-text-stroke:0.5px currentColor;transform:scaleY(1.08);transform-origin:0 29.5px"><span style="color:#000"></span></div><div class="a" style="left:0;width:79.5px;text-align:right;top:968.5px;height:42px;font-family:'Liberation Mono',monospace;font-size:32px;line-height:42px;color:#333;-webkit-text-stroke:0.25px #333;transform:scaleY(1.15);transform-origin:0 29.5px">24</div><svg class="a" style="left:87.5px;top:183.5px" width="12" height="8"><path d="M0.5,0.5 H10.5 L5.5,7 Z" fill="#777"/></svg><svg class="a" style="left:87.5px;top:267.5px" width="12" height="8"><path d="M0.5,0.5 H10.5 L5.5,7 Z" fill="#777"/></svg><svg class="a" style="left:87.5px;top:351.5px" width="12" height="8"><path d="M0.5,0.5 H10.5 L5.5,7 Z" fill="#777"/></svg><svg class="a" style="left:87.5px;top:435.5px" width="12" height="8"><path d="M0.5,0.5 H10.5 L5.5,7 Z" fill="#777"/></svg><div class="a" style="left:189.0px;top:294.0px;width:0;height:39px;border-left:1.3px dotted #c4c4c4"></div><div class="a" style="left:189.0px;top:378.0px;width:0;height:39px;border-left:1.3px dotted #c4c4c4"></div><div class="a" style="left:189.0px;top:462.0px;width:0;height:39px;border-left:1.3px dotted #c4c4c4"></div></div><div style="position:absolute;left:2004.30px;top:425.76px;font-family:'Liberation Sans', sans-serif;font-size:31px;line-height:31px;color:#777777;white-space:pre;transform-origin:0 0;transform:scaleX(0.9824);-webkit-text-stroke:0.8px #777777;">15 blocs restants sur 70 autorisés.</div><div class="a" style="left:2492px;top:414px;width:72px;height:66px;background:#448fdd;border-radius:12px 0 0 12px"></div><svg class="a" style="left:2492px;top:414px" width="72" height="66"><path d="M25.4,30.2 V23.4 H32.2 M39.3,23.4 H46.1 V30.2 M46.1,36.8 V44.1 H39.3 M32.2,44.1 H25.4 V36.8" fill="none" stroke="#fff" stroke-width="3.8" stroke-linejoin="round"/></svg><div class="a" style="left:2492px;top:500px;width:72px;height:66px;background:#448fdd;border-radius:12px 0 0 12px"></div><svg class="a" style="left:2492px;top:500px" width="72" height="66"><path d="M29,26.5 Q31.5,22 36,22 Q42.5,22 42.5,27.5 Q42.5,30.5 38.5,32.5 Q35.5,34.2 35.5,36" fill="none" stroke="#fff" stroke-width="5" stroke-linecap="round" stroke-linejoin="round"/><circle cx="35.4" cy="44.4" r="3.6" fill="#fff"/></svg><div class="a" style="left:2px;top:1436px;width:2578px;height:70px;background:linear-gradient(#15a4fb 0%,#15a3fa 60%,#1497e8 100%);border-radius:0 0 0 10px"></div><div class="a" style="left:0;top:1506px;width:2580px;height:2px;background:#111"></div><div style="position:absolute;left:13.50px;top:1450.14px;font-family:'Liberation Sans', sans-serif;font-size:40px;line-height:40px;color:#fff;white-space:pre;transform-origin:0 0;transform:scaleX(0.8918);">Réalisé par</div><div style="position:absolute;left:205.80px;top:1450.14px;font-family:'Liberation Sans', sans-serif;font-size:40px;line-height:40px;color:#0a5a96;white-space:pre;transform-origin:0 0;transform:scaleX(0.8434);">UPS</div><div style="position:absolute;left:284.20px;top:1450.14px;font-family:'Liberation Sans', sans-serif;font-size:40px;line-height:40px;color:#fff;white-space:pre;transform-origin:0 0;transform:scaleX(0.9464);">et</div><div style="position:absolute;left:326.90px;top:1450.14px;font-family:'Liberation Sans', sans-serif;font-size:40px;line-height:40px;color:#0a5a96;white-space:pre;transform-origin:0 0;transform:scaleX(0.8916);">France-ioi</div><div style="position:absolute;left:2014.50px;top:1450.14px;font-family:'Liberation Sans', sans-serif;font-size:40px;line-height:40px;color:#0a5a96;white-space:pre;transform-origin:0 0;transform:scaleX(0.9256);">Infos légales</div><div class="a" style="left:2235px;top:1456px;width:2.5px;height:32px;background:#fff"></div><div style="position:absolute;left:2251.50px;top:1450.14px;font-family:'Liberation Sans', sans-serif;font-size:40px;line-height:40px;color:#0a5a96;white-space:pre;transform-origin:0 0;transform:scaleX(0.9180);">Contactez-nous !</div><svg class="a" style="left:2540px;top:1451px" width="40" height="33"><rect x="0" y="0" width="40" height="33" fill="#0a5a96"/><path d="M0,2 L20,19 L40,2 M0,31 L14,15 M40,31 L26,15" fill="none" stroke="#15a0f5" stroke-width="2.2"/></svg><div class="a" style="left:0;top:0;width:2px;height:1508px;background:#0a0a0a"></div></body></html>
